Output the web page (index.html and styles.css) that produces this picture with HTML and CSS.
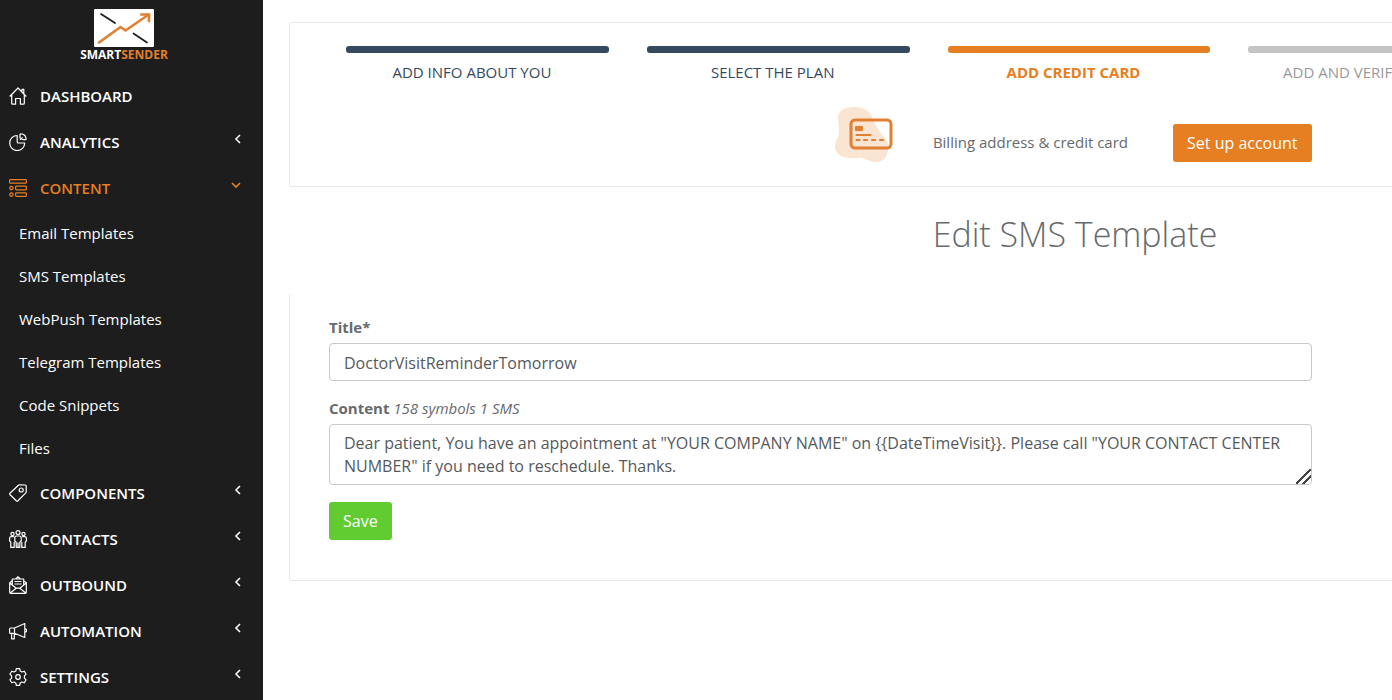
FILE: index.html
```html
<!DOCTYPE html>
<html lang="en">
<head>
  <meta charset="UTF-8">
  <meta name="viewport" content="width=device-width, initial-scale=1.0">
  <title>Edit SMS Template - SmartSender</title>
  <link rel="stylesheet" href="styles.css">
</head>
<body>
  <div class="page">
    <aside class="sidebar">
      <a class="logo" href="#">
        <svg width="60" height="38" viewBox="0 0 60 38" fill="none" stroke-linecap="round">
          <rect width="60" height="38" rx="1" fill="#fff"/>
          <path d="M7 5l14 9M39.500 24.500L53 33.500" stroke="#1d1d1d" stroke-width="1.700"/>
          <path d="M5 33.500L26.500 18l5 3.500L54 6" stroke="#e08030" stroke-width="2.600" stroke-linejoin="round"/>
          <path d="M47.500 5.500H55v6.500" stroke="#e08030" stroke-width="2.600" stroke-linecap="square"/>
        </svg>
        <span class="logo-text">SMART<span>SENDER</span></span>
      </a>

      <ul class="menu">
        <li>
          <a class="menu-link" href="#">
            <svg class="icon" viewBox="0 0 18 18"><path d="M.7 9.500L9 1l8.300 8.500M2.700 8v8.300q0 .9.900.9h3V11.500h4.800v5.700h3q.9 0 .9-.9V8M13 4.500V2.300h1.800v4"/></svg>
            <span>DASHBOARD</span>
          </a>
        </li>
        <li>
          <a class="menu-link" href="#">
            <svg class="icon" viewBox="0 0 18 18"><path d="M8.200 2.500a7.500 7.500 0 1 0 7.500 7.500H9.500q-1.300 0-1.300-1.300zM11 1.500q0-.8.900-.7a5.500 5.500 0 0 1 5.200 5q0 .9-.8.900h-2L11 5zM11 6.800l2.500-2.500"/></svg>
            <span>ANALYTICS</span>
            <svg class="chevron" viewBox="0 0 10 10"><path d="M7 1L3 5l4 4"/></svg>
          </a>
        </li>
        <li>
          <a class="menu-link active" href="#">
            <svg class="icon" viewBox="0 0 18 18"><rect x=".6" y=".6" width="16.800" height="3.600" rx=".8"/><rect x="6.600" y="7.200" width="10.800" height="3.600" rx=".8"/><rect x="6.600" y="13.800" width="10.800" height="3.600" rx=".8"/><circle cx="2.400" cy="9" r="1.700"/><circle cx="2.400" cy="15.600" r="1.700"/></svg>
            <span>CONTENT</span>
            <svg class="chevron open" viewBox="0 0 10 10"><path d="M1 3l4 4 4-4"/></svg>
          </a>
          <ul class="submenu">
            <li><a href="#">Email Templates</a></li>
            <li><a href="#">SMS Templates</a></li>
            <li><a href="#">WebPush Templates</a></li>
            <li><a href="#">Telegram Templates</a></li>
            <li><a href="#">Code Snippets</a></li>
            <li><a href="#">Files</a></li>
          </ul>
        </li>
        <li>
          <a class="menu-link" href="#">
            <svg class="icon" viewBox="0 0 18 18"><path d="M10.300.9l6 .1q.9 0 .9.900v6q0 .5-.4.900L8.700 17q-.6.500-1.200 0L.9 10.500q-.5-.6 0-1.200L9.400 1.300q.4-.4.900-.4z"/><circle cx="12.200" cy="6" r="2"/></svg>
            <span>COMPONENTS</span>
            <svg class="chevron" viewBox="0 0 10 10"><path d="M7 1L3 5l4 4"/></svg>
          </a>
        </li>
        <li>
          <a class="menu-link" href="#">
            <svg class="icon" viewBox="0 0 18 18"><circle cx="9" cy="2.600" r="2"/><circle cx="3.500" cy="3.900" r="1.600"/><circle cx="14.500" cy="3.900" r="1.600"/><path d="M7.200 17.400v-5.200L5.800 11V8q0-2 1.700-2h3q1.700 0 1.700 2v3l-1.400 1.200v5.200H9V12.500M7.200 17.400H9M4.800 6.700H2.500Q.6 6.700.6 8.500V11l1.200 1.200v5.200h3.400V12M13.200 6.700h2.300q1.900 0 1.900 1.800V11l-1.200 1.200v5.200h-3.400V12"/></svg>
            <span>CONTACTS</span>
            <svg class="chevron" viewBox="0 0 10 10"><path d="M7 1L3 5l4 4"/></svg>
          </a>
        </li>
        <li>
          <a class="menu-link" href="#">
            <svg class="icon" viewBox="0 0 18 18"><path d="M3.300 4.700L.7 6.800v9.500q0 1 1 1h14.600q1 0 1-1V6.800l-2.600-2.100M3.300 9V3h11.400v6M6.700 3L9 .8 11.300 3M.7 7l6.500 5.200h3.600L17.300 7M1.200 17l6-4.800M16.800 17l-6-4.800M5.500 5.500h7M5.500 8h7"/></svg>
            <span>OUTBOUND</span>
            <svg class="chevron" viewBox="0 0 10 10"><path d="M7 1L3 5l4 4"/></svg>
          </a>
        </li>
        <li>
          <a class="menu-link" href="#">
            <svg class="icon" viewBox="0 0 18 18"><path d="M5.500 6L15.800 1.500v14L5.500 11.300zM5.500 6H1.500q-.9 0-.9.900v3.500q0 .9.900.9h4M2.600 11.300v5.500h2.700v-5.500M15.800 6.800q2 .2 2 1.700t-2 1.700"/></svg>
            <span>AUTOMATION</span>
            <svg class="chevron" viewBox="0 0 10 10"><path d="M7 1L3 5l4 4"/></svg>
          </a>
        </li>
        <li>
          <a class="menu-link" href="#">
            <svg class="icon" viewBox="0 0 18 18"><path d="M7.300.7h3.400l.5 2.300 1.800 1 2.300-.8 1.800 3-1.700 1.700v2.200l1.700 1.700-1.800 3-2.300-.8-1.800 1-.5 2.300H7.300L6.800 15 5 14l-2.300.8-1.800-3 1.700-1.700V7.900L.9 6.200l1.800-3L5 4l1.800-1z"/><circle cx="9" cy="9" r="2.300"/></svg>
            <span>SETTINGS</span>
            <svg class="chevron" viewBox="0 0 10 10"><path d="M7 1L3 5l4 4"/></svg>
          </a>
        </li>
      </ul>
    </aside>

    <main class="main">
      <section class="panel setup">
        <ol class="steps">
          <li class="done"><span>ADD INFO ABOUT YOU</span></li>
          <li class="done"><span>SELECT THE PLAN</span></li>
          <li class="current"><span>ADD CREDIT CARD</span></li>
          <li><span>ADD AND VERIFY DOMAIN</span></li>
          <li><span>START SENDING</span></li>
        </ol>
        <div class="column setup-action">
          <svg class="card-icon" width="58" height="56" viewBox="0 0 58 56">
            <path d="M3 14C2 5 9 1 19 1s16 4 19 12 6 12 11 18 5 8 4 13c-1 9-7 13-14 12s-10-5-16-4S7 52 3 48s-4-10-1-15 2-11 1-19z" fill="#fae5d3"/>
            <rect x="16" y="14" width="40" height="28" rx="4" fill="none" stroke="#e08030" stroke-width="3"/>
            <rect x="20" y="20" width="8" height="5" rx="1" fill="#e08030"/>
            <path d="M21.500 29h14M21.500 34h3M29 34h3M37 34h3M45 34h3" stroke="#e08030" stroke-width="2.200" stroke-linecap="round"/>
          </svg>
          <span class="setup-text">Billing address &amp; credit card</span>
          <button class="btn btn-orange" type="button">Set up account</button>
        </div>
      </section>

      <h1>Edit SMS Template</h1>

      <section class="panel editor">
        <form class="column">
          <label for="title">Title*</label>
          <input id="title" type="text" value="DoctorVisitReminderTomorrow">
          <label for="content">Content <em>158 symbols 1 SMS</em></label>
          <textarea id="content" rows="2">Dear patient, You have an appointment at "YOUR COMPANY NAME" on {{DateTimeVisit}}. Please call "YOUR CONTACT CENTER NUMBER" if you need to reschedule. Thanks.</textarea>
          <button class="btn btn-green" type="button">Save</button>
        </form>
      </section>
    </main>
  </div>
</body>
</html>
```

FILE: styles.css
```css
* {
  box-sizing: border-box;
}
body {
  margin: 0;
  font-family: "Open Sans", sans-serif;
  font-size: 15px;
  color: #676a6c;
  background-color: #fff;
}
ul, ol {
  margin: 0;
  padding: 0;
  list-style: none;
}
a {
  color: inherit;
  text-decoration: none;
}
.page {
  display: flex;
  min-height: 100vh;
  overflow: hidden;
}

/* sidebar */
.sidebar {
  flex: none;
  width: 263px;
  background-color: #1d1d1d;
  color: #fff;
}
.logo {
  display: flex;
  flex-direction: column;
  align-items: center;
  height: 73px;
  padding-top: 9px;
  padding-right: 15px;
}
.logo-text {
  font-size: 12px;
  font-weight: 700;
  line-height: 16px;
}
.logo-text span {
  color: #e08030;
}
.menu-link {
  display: flex;
  align-items: center;
  height: 46px;
  padding: 0 20px 0 9px;
  font-weight: 600;
}
.menu-link.active {
  color: #e67e22;
}
.icon {
  width: 18px;
  height: 18px;
  margin-right: 13px;
  fill: none;
  stroke: currentColor;
  stroke-width: 1.2;
  stroke-linejoin: round;
}
.chevron {
  width: 10px;
  height: 10px;
  margin: 0 0 6px auto;
  fill: none;
  stroke: currentColor;
  stroke-width: 1.6;
}
.chevron.open {
  margin-right: 2px;
}
.submenu {
  padding-top: 1px;
}
.submenu a {
  display: block;
  padding-left: 19px;
  line-height: 43px;
}

/* content, wide enough for all five steps */
.main {
  flex: 1 0 auto;
  min-width: 1624px;
  padding: 22px 26px;
}
.panel {
  padding: 0 24px;
  border: 1px solid #e7eaec;
  border-radius: 2px;
}
.column {
  width: 66.66%;
  padding: 0 17px 0 15px;
}
.steps {
  display: grid;
  grid-template-columns: repeat(5, 1fr);
  gap: 38px;
  padding: 23px 24px 0 32px;
}
.steps li {
  color: #999;
  font-weight: 500;
  line-height: 20px;
  text-align: center;
}
.steps li::before {
  content: "";
  display: block;
  height: 7px;
  margin-bottom: 9px;
  border-radius: 3px;
  background-color: #c4c4c4;
}
.steps span {
  display: block;
  padding-right: 11px;
}
.steps .done {
  color: #34495e;
}
.steps .done::before {
  background-color: #34495e;
}
.steps .current {
  color: #e67e22;
  font-weight: 700;
}
.steps .current::before {
  background-color: #e67e22;
}
.setup-action {
  display: flex;
  align-items: flex-end;
  justify-content: flex-end;
  padding-top: 24px;
  padding-bottom: 24px;
}
.setup-text {
  margin: 0 45px 0 40px;
  line-height: 40px;
}
.btn {
  height: 38px;
  padding: 0 14px;
  border: 0;
  border-radius: 3px;
  color: #fff;
  font-family: inherit;
  font-size: 16px;
  cursor: pointer;
}
.btn-orange {
  background-color: #e67e22;
}
.btn-green {
  background-color: #61cb32;
}
h1 {
  margin: 23px 0 36px;
  font-size: 34px;
  font-weight: 300;
  line-height: 48px;
  text-align: center;
}

/* form */
.editor {
  padding-top: 23px;
  padding-bottom: 40px;
  border-top: 0;
}
label {
  display: block;
  margin-bottom: 6px;
  font-weight: 700;
  line-height: 20px;
}
label em {
  font-weight: 400;
}
input, textarea {
  display: block;
  width: 100%;
  margin: 0 0 17px;
  padding: 7px 14px 6px;
  border: 1px solid #c8c8c8;
  border-radius: 4px;
  background-color: #fff;
  color: #55595c;
  font-family: inherit;
  font-size: 16px;
  line-height: 23px;
}
input {
  height: 38px;
}
textarea::-webkit-resizer {
  background: linear-gradient(135deg, transparent 46%, #444 46%, #444 56%, transparent 56%, transparent 68%, #444 68%, #444 78%, transparent 78%);
}
```
